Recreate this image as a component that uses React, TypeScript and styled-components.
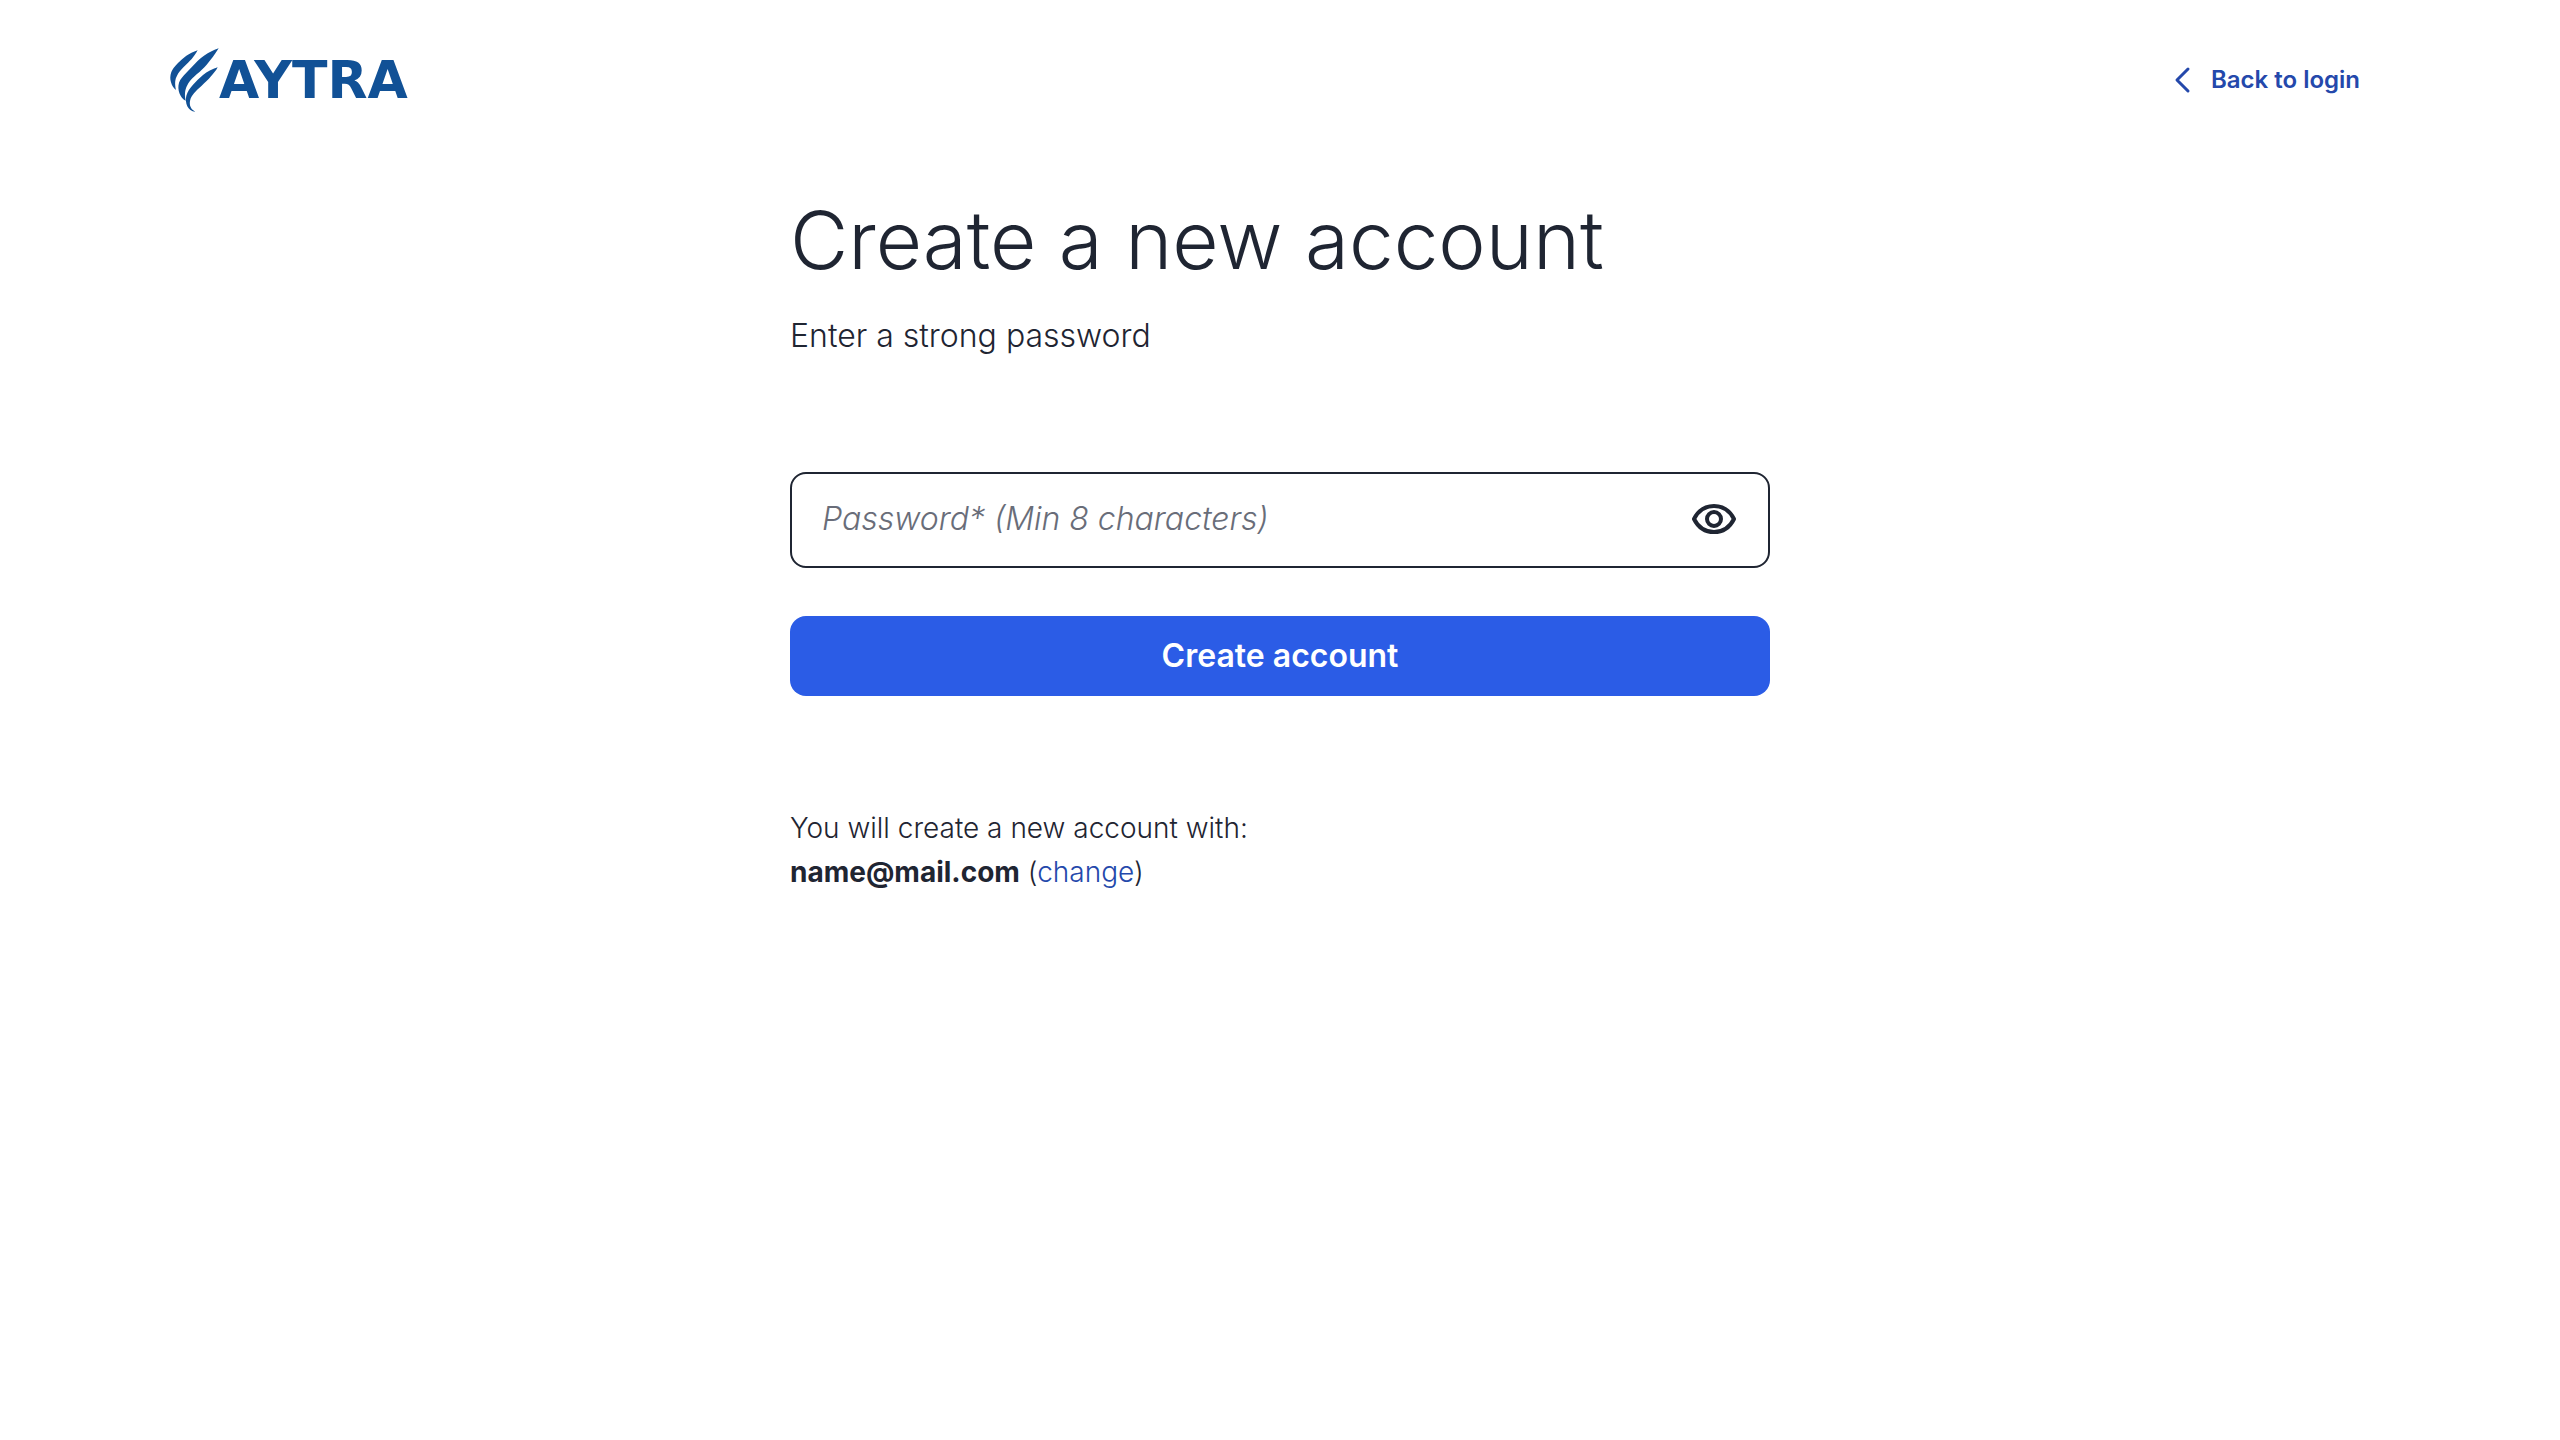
import React, { useState } from "react";
import styled, { createGlobalStyle } from "styled-components";

const ink = "#1f2532";
const link = "#2448ab";
const brand = "#115196";

const GlobalStyle = createGlobalStyle`
  *, *::before, *::after { box-sizing: border-box; }
  body {
    margin: 0;
    background: #fff;
    color: ${ink};
    font-family: Inter, "Open Sans", sans-serif;
    font-weight: 300;
  }
`;

const Header = styled.header`
  display: flex;
  align-items: center;
  justify-content: space-between;
  padding: 48px 200px 0 170px;
`;

const Brand = styled.a`
  display: flex;
  align-items: center;
  height: 64px;
  color: ${brand};
  font: 700 52px/64px "DejaVu Sans", sans-serif;
  text-decoration: none;
`;

const BackLink = styled.a`
  display: flex;
  align-items: center;
  gap: 20px;
  color: ${link};
  font-size: 24px;
  line-height: 32px;
  font-weight: 600;
  text-decoration: none;
`;

const Main = styled.main`
  width: 100%;
  max-width: 980px;
  margin: 0 auto;
  padding-top: 80px;
`;

const Title = styled.h1`
  margin: 0;
  font-size: 80px;
  line-height: 96px;
  font-weight: 300;
`;

const Subtitle = styled.p`
  margin: 24px 0 0;
  font-size: 32px;
  line-height: 48px;
`;

const Form = styled.form`
  display: flex;
  flex-direction: column;
  gap: 48px;
  margin: 112px 0 110px;
`;

const Field = styled.div`
  display: flex;
  align-items: center;
  height: 96px;
  padding: 0 30px 2px;
  border: 2px solid ${ink};
  border-radius: 16px;
`;

const PasswordInput = styled.input`
  flex: 1;
  min-width: 0;
  padding: 0;
  border: 0;
  outline: 0;
  background: transparent;
  color: ${ink};
  font: inherit;
  font-size: 32px;
  line-height: 48px;

  &::placeholder {
    color: #696d79;
    opacity: 1;
    font-style: italic;
  }
`;

const RevealButton = styled.button`
  display: flex;
  padding: 0;
  border: 0;
  background: transparent;
  color: ${ink};
  cursor: pointer;
`;

const SubmitButton = styled.button`
  height: 80px;
  padding: 0 32px 2px;
  border: 0;
  border-radius: 16px;
  background: #2b5ce6;
  color: #fff;
  font: inherit;
  font-size: 32px;
  font-weight: 600;
  cursor: pointer;
`;

const Note = styled.p`
  margin: 0;
  font-size: 28px;
  line-height: 44px;
`;

const Email = styled.strong`
  font-weight: 700;
`;

const ChangeLink = styled.a`
  color: ${link};
  text-decoration: none;
`;

const WingMark = () => (
  <svg width="49" height="64" viewBox="29 24 147 192" fill="currentColor" aria-hidden="true">
    <path d="M112 31C98 36 88 41 78 47C69 54 61 61 53 69C43 79 36 88 33 96C29 108 29 117 32 127C35 138 40 145 47 150C43 130 44 118 50 107C55 97 61 90 70 81C80 72 87 64 94 57C100 49 106 42 112 31Z" />
    <path d="M175 25C158 31 145 38 133 46C123 53 115 60 106 69L78 98C68 108 60 117 56 128C50 149 59 173 76 182C71 160 75 145 84 130C91 119 99 112 109 103C121 93 130 84 139 74C152 59 163 44 175 25Z" />
    <path d="M172 82C155 87 141 95 128 105C117 114 107 124 98 134C88 145 82 154 78 167C73 188 82 213 105 215C90 207 87 195 89 183C91 174 94 168 101 160C107 152 115 145 124 137C134 128 144 119 152 109C160 100 167 92 172 82Z" />
  </svg>
);

const ChevronLeft = () => (
  <svg width="17" height="28" viewBox="0 0 17 28" fill="none" stroke="currentColor" strokeWidth="3" strokeLinecap="round" strokeLinejoin="round" aria-hidden="true">
    <path d="M14 3L3 14L14 25" />
  </svg>
);

const Eye = () => (
  <svg width="48" height="32" viewBox="0 0 48 32" fill="none" stroke="currentColor" strokeWidth="4" strokeLinejoin="round" aria-hidden="true">
    <path d="M4 16C8 8 15 3 24 3S40 8 44 16C40 24 33 29 24 29S8 24 4 16Z" />
    <circle cx="24" cy="16" r="7" />
  </svg>
);

export default function App() {
  const [visible, setVisible] = useState(false);
  return (
    <>
      <GlobalStyle />
      <Header>
        <Brand href="#">
          <WingMark />
          AYTRA
        </Brand>
        <BackLink href="#login">
          <ChevronLeft />
          Back to login
        </BackLink>
      </Header>
      <Main>
        <Title>Create a new account</Title>
        <Subtitle>Enter a strong password</Subtitle>
        <Form onSubmit={(event) => event.preventDefault()}>
          <Field>
            <PasswordInput
              aria-label="Password"
              type={visible ? "text" : "password"}
              minLength={8}
              required
              placeholder="Password* (Min 8 characters)"
            />
            <RevealButton type="button" aria-label="Show password" aria-pressed={visible} onClick={() => setVisible(!visible)}>
              <Eye />
            </RevealButton>
          </Field>
          <SubmitButton type="submit">Create account</SubmitButton>
        </Form>
        <Note>You will create a new account with:</Note>
        <Note>
          <Email>name@mail.com</Email> (<ChangeLink href="#change">change</ChangeLink>)
        </Note>
      </Main>
    </>
  );
}
